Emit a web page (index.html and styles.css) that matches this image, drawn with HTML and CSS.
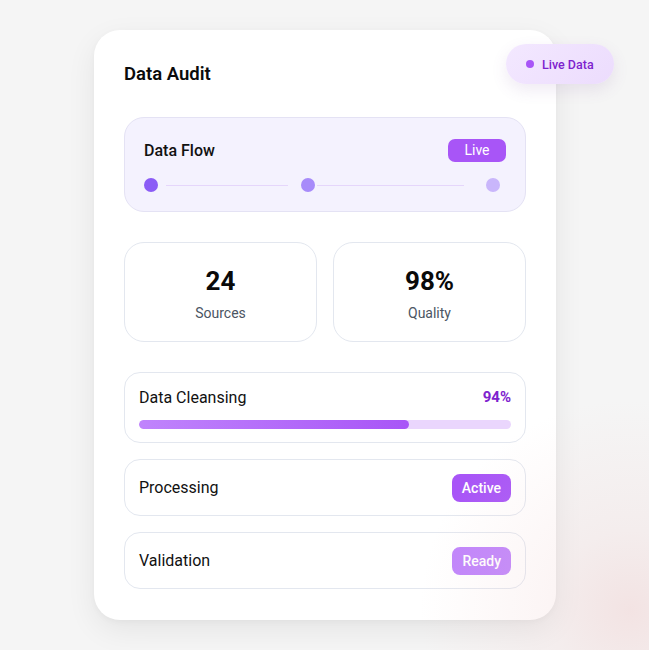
FILE: index.html
```html
<!DOCTYPE html>
<html>
<head>
<meta charset="utf-8">
<link rel="stylesheet" href="styles.css">
</head>
<body>
<div class="glow"></div>
<div class="card">
  <div class="pill"><span class="pill-dot"></span>Live Data</div>
  <h1 class="title">Data Audit</h1>
  <div class="flow">
    <div class="flow-head">
      <span class="flow-title">Data Flow</span>
      <span class="badge-live">Live</span>
    </div>
    <div class="flow-track">
      <span class="dot dot1"></span>
      <span class="line line1"></span>
      <span class="dot dot2"></span>
      <span class="line line2"></span>
      <span class="dot dot3"></span>
    </div>
  </div>
  <div class="stats">
    <div class="stat"><div class="stat-num">24</div><div class="stat-label">Sources</div></div>
    <div class="stat"><div class="stat-num">98%</div><div class="stat-label">Quality</div></div>
  </div>
  <div class="rows">
    <div class="row row-progress">
      <div class="row-head">
        <span class="row-name">Data Cleansing</span>
        <span class="pct">94%</span>
      </div>
      <div class="bar"><div class="bar-fill" style="width:72.5%"></div></div>
    </div>
    <div class="row row-status">
      <span class="row-name">Processing</span>
      <span class="status active">Active</span>
    </div>
    <div class="row row-status">
      <span class="row-name">Validation</span>
      <span class="status ready">Ready</span>
    </div>
  </div>
</div>
</body>
</html>
```
FILE: styles.css
```css
* { box-sizing: border-box; }
html, body { margin: 0; padding: 0; }
html { overflow: hidden; }
body {
  width: 649px;
  height: 650px;
  overflow: hidden;
  background: #f5f5f5;
  font-family: Roboto, "Liberation Sans", sans-serif;
  color: #111;
  padding: 30px 0 0 94px;
  position: relative;
}
.glow {
  position: absolute;
  left: 400px;
  top: 400px;
  width: 249px;
  height: 250px;
  background: radial-gradient(circle at 230px 210px, rgba(240, 205, 205, 0.45) 0%, rgba(240, 205, 205, 0.2) 80px, rgba(245, 245, 245, 0) 210px);
  pointer-events: none;
  z-index: 2;
}
.card {
  position: relative;
  width: 462px;
  height: 590px;
  background: #fff;
  border-radius: 26px;
  box-shadow: 0 10px 30px rgba(0, 0, 0, 0.07), 0 2px 6px rgba(0, 0, 0, 0.03);
  padding: 30px 30px;
  z-index: 1;
}
.pill {
  position: absolute;
  left: 412px;
  top: 14px;
  height: 40px;
  padding: 0 20px 0 20px;
  display: flex;
  align-items: center;
  gap: 8px;
  border-radius: 20px;
  background: linear-gradient(135deg, #f3e8ff, #ecdcfd);
  box-shadow: 0 6px 16px rgba(120, 80, 160, 0.12);
  color: #7e22ce;
  font-size: 12.5px;
  font-weight: 500;
  z-index: 3;
  white-space: nowrap;
}
.pill-dot {
  width: 8px;
  height: 8px;
  border-radius: 50%;
  background: #a855f7;
}
.title {
  margin: 0 0 29px 0;
  font-size: 18.5px;
  line-height: 28px;
  font-weight: 600;
  color: #0b0b0b;
}
.flow {
  height: 95px;
  background: #f4f2fe;
  border: 1px solid #e4e2f4;
  border-radius: 20px;
  padding: 20px 19px 0 19px;
}
.flow-head {
  display: flex;
  justify-content: space-between;
  align-items: center;
  height: 24px;
}
.flow-title {
  font-size: 16px;
  font-weight: 500;
  color: #111;
}
.badge-live {
  background: #a855f7;
  color: #fff;
  font-size: 14px;
  height: 23px;
  line-height: 23px;
  padding: 0 16.5px;
  border-radius: 7px;
}
.flow-track {
  display: flex;
  align-items: center;
  margin-top: 16px;
}
.dot {
  width: 14px;
  height: 14px;
  border-radius: 50%;
  flex: none;
}
.dot1 { background: #8b5cf6; }
.dot2 { background: #a78bfa; }
.dot3 { background: #c9b6fb; }
.line {
  flex: none;
  height: 1px;
  background: #e5d6fb;
}
.line1 { width: 122px; margin: 0 13px 0 8px; }
.line2 { width: 147px; margin: 0 22px 0 2px; }
.stats {
  display: grid;
  grid-template-columns: 1fr 1fr;
  gap: 16px;
  margin-top: 30px;
}
.stat {
  height: 100px;
  border: 1px solid #e3e7ef;
  border-radius: 20px;
  display: flex;
  flex-direction: column;
  align-items: center;
  padding-top: 22px;
}
.stat-num {
  font-size: 26px;
  font-weight: 700;
  line-height: 32px;
  color: #0a0a0a;
}
.stat-label {
  margin-top: 7px;
  font-size: 14px;
  color: #4b5563;
  line-height: 18px;
}
.rows {
  display: flex;
  flex-direction: column;
  gap: 16px;
  margin-top: 30px;
}
.row {
  border: 1px solid #e3e7ef;
  border-radius: 16px;
  padding: 0 14px;
}
.row-progress {
  height: 71px;
  padding-top: 13px;
}
.row-head {
  display: flex;
  justify-content: space-between;
  align-items: center;
  height: 22px;
}
.row-name {
  font-size: 16px;
  color: #111;
}
.pct {
  font-size: 15px;
  font-weight: 700;
  color: #7e22ce;
}
.bar {
  margin-top: 12px;
  height: 9px;
  border-radius: 5px;
  background: #ead6fd;
  overflow: hidden;
}
.bar-fill {
  height: 100%;
  border-radius: 5px;
  background: linear-gradient(90deg, #c084fc, #a855f7);
}
.row-status {
  height: 57px;
  display: flex;
  justify-content: space-between;
  align-items: center;
}
.status {
  color: #fff;
  font-size: 14px;
  font-weight: 500;
  height: 28px;
  line-height: 28px;
  padding: 0 10px;
  border-radius: 8px;
}
.active { background: #a855f7; }
.ready { background: #c084fc; }
```
